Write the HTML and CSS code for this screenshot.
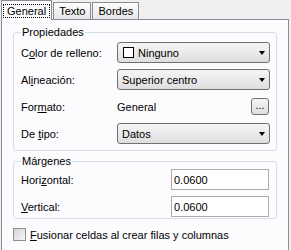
FILE: index.html
```html
<!DOCTYPE html>
<html lang="es">
<head>
  <meta charset="UTF-8" />
  <title>Propiedades de celda</title>
  <link rel="stylesheet" href="styles.css">
</head>
<body>
  <div class="tabs">
    <div class="tab activo"><span class="foco">General</span></div>
    <div class="tab">Texto</div>
    <div class="tab">Bordes</div>
  </div>

  <div class="panel">
    <fieldset class="grupo">
      <legend>Propiedades</legend>
      <div class="fila">
        <label>C<u>o</u>lor de relleno:</label>
        <div class="combo"><span class="muestra"></span>Ninguno<span class="flecha"></span></div>
      </div>
      <div class="fila">
        <label>Al<u>i</u>neación:</label>
        <div class="combo">Superior centro<span class="flecha"></span></div>
      </div>
      <div class="fila">
        <label>For<u>m</u>ato:</label>
        <span class="valor">General</span>
        <button class="puntos">...</button>
      </div>
      <div class="fila">
        <label>De <u>t</u>ipo:</label>
        <div class="combo">Datos<span class="flecha"></span></div>
      </div>
    </fieldset>

    <fieldset class="grupo margenes">
      <legend>Márgenes</legend>
      <div class="fila">
        <label>Hori<u>z</u>ontal:</label>
        <input type="text" value="0.0600" />
      </div>
      <div class="fila">
        <label><u>V</u>ertical:</label>
        <input type="text" value="0.0600" />
      </div>
    </fieldset>

    <div class="opcion">
      <span class="casilla"></span>
      <span><u>F</u>usionar celdas al crear filas y columnas</span>
    </div>
  </div>
</body>
</html>
```

FILE: styles.css
```css
body {
  margin: 0;
  background-color: #f0f0f0;
  font-family: "Liberation Sans", Arial, sans-serif;
  font-size: 11px;
  color: #000;
}

/* pestañas */
.tabs {
  display: flex;
  align-items: flex-end;
  height: 19px;
  padding-left: 1px;
}
.tab {
  height: 17px;
  line-height: 16px;
  padding: 0 5px;
  margin-right: 1px;
  border: 1px solid #898c95;
  border-bottom: none;
  box-sizing: border-box;
  background: linear-gradient(#fdfdfd, #e6e6e6);
}
.tab.activo {
  position: relative;
  z-index: 1;
  height: 20px;
  margin-bottom: -1px;
  padding: 0 1px;
  background: #fcfcfe;
}
.foco {
  display: inline-block;
  margin-top: 3px;
  padding: 0 3px;
  line-height: 12px;
  border: 1px dotted #000;
}

/* panel */
.panel {
  width: 286px;
  height: 225px;
  margin-left: 1px;
  border: 1px solid #898c95;
  background-color: #fcfcfe;
  padding-top: 6px;
  box-sizing: content-box;
  display: flex;
  flex-direction: column;
}
.grupo {
  margin: 0 11px;
  padding: 3px 6px 6px 7px;
  border: 1px solid #d5dfe5;
  border-radius: 3px;
  display: flex;
  flex-direction: column;
  gap: 6px;
}
.grupo legend {
  padding: 0 1px;
  line-height: 13px;
}
.margenes {
  margin-top: 4px;
  padding-top: 1px;
  padding-bottom: 1px;
}
.fila {
  display: flex;
  align-items: center;
  height: 21px;
}
.fila label {
  width: 96px;
  flex-shrink: 0;
}
.margenes .fila label {
  width: 150px;
}

.combo {
  flex: 1;
  height: 21px;
  box-sizing: border-box;
  display: flex;
  align-items: center;
  padding-left: 4px;
  border: 1px solid #707070;
  border-radius: 3px;
  background: linear-gradient(#f6f6f6, #dedede);
}
.muestra {
  width: 9px;
  height: 9px;
  margin: 0 4px 0 1px;
  border: 1px solid #000;
  background: #fff;
}
.flecha {
  margin-left: auto;
  margin-right: 4px;
  width: 0;
  height: 0;
  border-top: 4px solid #000;
  border-left: 3.5px solid transparent;
  border-right: 3.5px solid transparent;
}
.valor {
  flex: 1;
}
.puntos {
  width: 18px;
  height: 17px;
  margin-right: 1px;
  padding: 0 0 3px;
  font: inherit;
  border: 1px solid #707070;
  border-radius: 3px;
  background: linear-gradient(#f6f6f6, #dedede);
}

input {
  width: 98px;
  height: 21px;
  box-sizing: border-box;
  padding: 0 2px;
  font: inherit;
  border: 1px solid #abadb3;
  background: #fff;
}

.opcion {
  display: flex;
  align-items: center;
  gap: 4px;
  margin: 9px 11px 0;
}
.casilla {
  width: 11px;
  height: 11px;
  border: 1px solid #8f8f8f;
  background: linear-gradient(135deg, #d4d4d4, #f7f7f7);
}
```
